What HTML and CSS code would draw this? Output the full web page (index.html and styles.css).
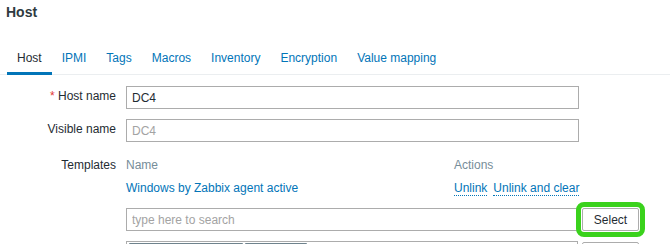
FILE: index.html
```html
<!DOCTYPE html>
<html lang="en">
<head>
<meta charset="utf-8">
<title>Host</title>
<link rel="stylesheet" href="styles.css">
</head>
<body>
<header class="page-header">
  <h1 class="page-title">Host</h1>
</header>
<nav class="tabs">
  <a class="tab tab-active">Host</a>
  <a class="tab">IPMI</a>
  <a class="tab">Tags</a>
  <a class="tab">Macros</a>
  <a class="tab">Inventory</a>
  <a class="tab">Encryption</a>
  <a class="tab">Value mapping</a>
</nav>
<form class="form">
  <label class="form-label"><span class="req">*</span> Host name</label>
  <input class="field" type="text" value="DC4">

  <label class="form-label">Visible name</label>
  <input class="field" type="text" placeholder="DC4">

  <label class="form-label form-label-table">Templates</label>
  <div class="templates">
    <div class="tpl-table">
      <div class="tpl-head">Name</div>
      <div class="tpl-head">Actions</div>
      <div class="tpl-cell"><a class="link">Windows by Zabbix agent active</a></div>
      <div class="tpl-cell tpl-actions"><a class="link link-dotted">Unlink</a><a class="link link-dotted">Unlink and clear</a></div>
    </div>
    <div class="ms-row">
      <div class="ms"><input class="ms-input" type="text" placeholder="type here to search"></div>
      <button class="btn btn-highlight" type="button">Select</button>
    </div>
    <div class="ms-row">
      <div class="ms ms-chips"><span class="chip chip-wide"></span><span class="chip chip-narrow"></span></div>
      <button class="btn btn-low" type="button" aria-label="Select"></button>
    </div>
  </div>
</form>
</body>
</html>
```

FILE: styles.css
```css
html, body {
  margin: 0;
  padding: 0;
  background: #ffffff;
  overflow: hidden;
}
body {
  font-family: "Liberation Sans", Arial, sans-serif;
  font-size: 12px;
  line-height: 14px;
  color: #1f2c33;
}
.page-header {
  padding: 4px 6px 0;
}
.page-title {
  margin: 0;
  font-size: 14px;
  line-height: 17px;
  font-weight: bold;
  color: #2f3a40;
}
.tabs {
  display: flex;
  margin-top: 23px;
  padding-left: 7px;
  border-bottom: 1px solid #ebeef0;
}
.tab {
  padding: 7px 10px 7px;
  border-bottom: 3px solid transparent;
  margin-bottom: -1px;
  color: #0275b8;
  white-space: nowrap;
}
.tab-active {
  color: #1f2c33;
  border-bottom-color: #0275b8;
}
.form {
  display: grid;
  grid-template-columns: 116px 453px;
  column-gap: 10px;
  row-gap: 10px;
  padding-top: 11px;
  align-items: start;
}
.form-label {
  text-align: right;
  padding-top: 3px;
  white-space: nowrap;
}
.form-label-table {
  padding-top: 6px;
}
.req {
  color: #e33734;
}
.field, .ms {
  box-sizing: border-box;
  height: 23px;
  border: 1px solid #acacac;
  background: #ffffff;
  font-family: inherit;
  font-size: 12px;
  color: #1f2c33;
  padding: 0 5px;
  margin: 0;
  outline: none;
}
.field::placeholder, .ms-input::placeholder {
  color: #a3a3a3;
  opacity: 1;
}
.templates {
  display: flex;
  flex-direction: column;
  min-width: 0;
}
.tpl-table {
  display: grid;
  grid-template-columns: 328px 1fr;
}
.tpl-head {
  color: #768d99;
  padding: 6px 0 3px;
}
.tpl-cell {
  padding-top: 6px;
  white-space: nowrap;
}
.tpl-actions {
  display: flex;
  gap: 6px;
}
.link {
  color: #0275b8;
  text-decoration: none;
}
.link-dotted {
  border-bottom: 1px dotted #0275b8;
}
.ms-row {
  display: flex;
  gap: 4px;
  margin-top: 12px;
  width: 513px;
}
.ms-row + .ms-row {
  margin-top: 10px;
}
.ms {
  flex: none;
  width: 452px;
  padding: 0;
  display: flex;
  align-items: stretch;
}
.ms-input {
  flex: 1;
  min-width: 0;
  border: none;
  outline: none;
  margin: 0;
  padding: 0 5px;
  font-family: inherit;
  font-size: 12px;
  background: transparent;
}
.ms-chips {
  height: 26px;
  padding: 1px 2px;
  gap: 2px;
  align-items: flex-start;
}
.chip {
  box-sizing: border-box;
  height: 20px;
  border: 1px solid #8d9ca4;
  border-top: 2px solid #6f838d;
  background: #ebeef0;
  border-radius: 1px;
}
.chip-wide {
  width: 114px;
}
.chip-narrow {
  width: 62px;
}
.btn {
  flex: none;
  box-sizing: border-box;
  width: 57px;
  height: 23px;
  margin: 0;
  padding: 0;
  border: 1px solid #acacac;
  border-radius: 2px;
  background: #ffffff;
  font-family: inherit;
  font-size: 12px;
  color: #1f2c33;
}
.btn-low {
  margin-top: 1px;
}
.btn-highlight {
  outline: 5px solid #3ad21c;
  outline-offset: 1px;
}
```
